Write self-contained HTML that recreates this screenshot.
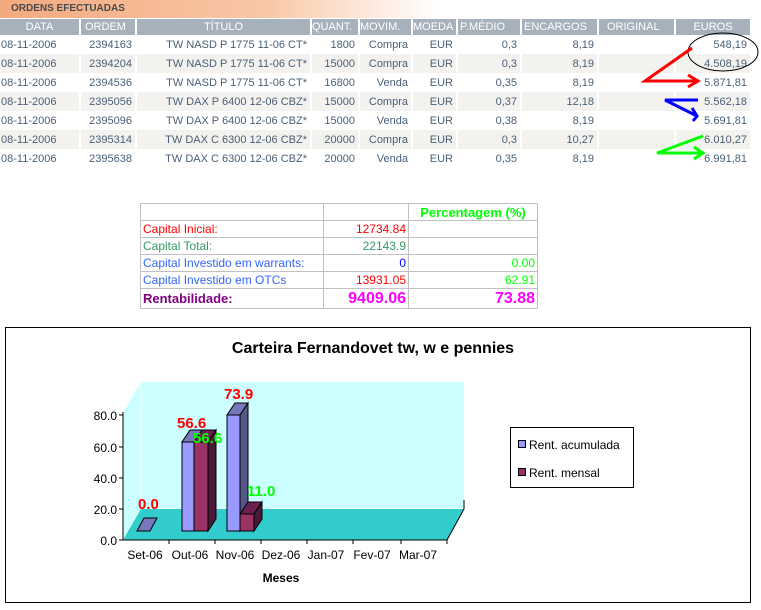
<!DOCTYPE html>
<html><head><meta charset="utf-8"><style>
body{margin:0;width:761px;height:610px;background:#fff;position:relative;overflow:hidden;font-family:"Liberation Sans",Arial,sans-serif}
.hb{position:absolute;left:0;top:0;width:440px;height:18px;background:linear-gradient(90deg,#f3a97f 0%,#f8c7a6 60%,#fff 100%)}
.hb span{position:absolute;left:11px;top:3px;font-size:10px;font-weight:bold;color:#4a4a4a}
table.o{position:absolute;left:0;top:19px;border-collapse:collapse;table-layout:fixed;width:751px;font-size:11px;color:#4a6078}
table.o th{background:#a7b1bb;color:#fff;font-weight:normal;height:16px;padding:0;border-right:2px solid #fff;font-size:11px;overflow:hidden;white-space:nowrap}
table.o td{height:19px;padding:0 3px 0 0;text-align:right;white-space:nowrap;border-right:2px solid #fff;overflow:hidden}
table.o tr.g td{background:#f3f2ef}
table.o td:first-child{text-align:left;padding-left:1px}
table.c{position:absolute;left:140px;top:203px;border-collapse:collapse;font-size:12px}
table.c td{border:1px solid #c0c0c0;padding:0 2px;height:16px;white-space:nowrap}
</style></head><body>
<div class="hb"><span>ORDENS EFECTUADAS</span></div>
<table class="o">
<colgroup><col style="width:80px"><col style="width:56px"><col style="width:175px"><col style="width:48px"><col style="width:53px"><col style="width:45px"><col style="width:64px"><col style="width:77px"><col style="width:77px"><col style="width:76px"></colgroup>
<tr><th>DATA</th><th style="text-align:left;padding-left:4px">ORDEM</th><th>TÍTULO</th><th style="text-align:left">QUANT.</th><th style="text-align:left">MOVIM.</th><th style="text-align:left">MOEDA</th><th style="text-align:left;padding-left:2px">P.MÉDIO</th><th style="text-align:left;padding-left:2px">ENCARGOS</th><th style="text-align:left;padding-left:8px">ORIGINAL</th><th>EUROS</th></tr>
<tr><td>08-11-2006</td><td>2394163</td><td>TW NASD P 1775 11-06 CT*</td><td>1800</td><td>Compra</td><td>EUR</td><td>0,3</td><td>8,19</td><td></td><td>548,19</td></tr>
<tr class="g"><td>08-11-2006</td><td>2394204</td><td>TW NASD P 1775 11-06 CT*</td><td>15000</td><td>Compra</td><td>EUR</td><td>0,3</td><td>8,19</td><td></td><td>4.508,19</td></tr>
<tr><td>08-11-2006</td><td>2394536</td><td>TW NASD P 1775 11-06 CT*</td><td>16800</td><td>Venda</td><td>EUR</td><td>0,35</td><td>8,19</td><td></td><td>5.871,81</td></tr>
<tr class="g"><td>08-11-2006</td><td>2395056</td><td>TW DAX P 6400 12-06 CBZ*</td><td>15000</td><td>Compra</td><td>EUR</td><td>0,37</td><td>12,18</td><td></td><td>5.562,18</td></tr>
<tr><td>08-11-2006</td><td>2395096</td><td>TW DAX P 6400 12-06 CBZ*</td><td>15000</td><td>Venda</td><td>EUR</td><td>0,38</td><td>8,19</td><td></td><td>5.691,81</td></tr>
<tr class="g"><td>08-11-2006</td><td>2395314</td><td>TW DAX C 6300 12-06 CBZ*</td><td>20000</td><td>Compra</td><td>EUR</td><td>0,3</td><td>10,27</td><td></td><td>6.010,27</td></tr>
<tr><td>08-11-2006</td><td>2395638</td><td>TW DAX C 6300 12-06 CBZ*</td><td>20000</td><td>Venda</td><td>EUR</td><td>0,35</td><td>8,19</td><td></td><td>6.991,81</td></tr>
</table>
<svg style="position:absolute;left:0;top:0" width="761" height="170">
<ellipse cx="723" cy="52" rx="35" ry="19" fill="none" stroke="#000" stroke-width="1"/>
<g fill="none" stroke-width="3" stroke-linejoin="miter">
<polyline points="692,48 645,81 698,81" stroke="#f00"/><polyline points="688,75 698,81 688,87" stroke="#f00"/>
<polyline points="698,100 665,100 697,116" stroke="#00f"/><polyline points="692,108 697,116 693,121" stroke="#00f"/>
<polyline points="703,136 657,153 703,153" stroke="#0f0"/><polyline points="694,147 703,153 694,159" stroke="#0f0"/>
</g></svg>
<table class="c">
<tr><td style="width:178px"></td><td style="width:80px"></td><td style="width:124px;text-align:center;color:#0f0;font-weight:bold;font-size:13px">Percentagem (%)</td></tr>
<tr><td style="color:#f00">Capital Inicial:</td><td style="text-align:right;color:#f00">12734.84</td><td></td></tr>
<tr><td style="color:#339966">Capital Total:</td><td style="text-align:right;color:#339966">22143.9</td><td></td></tr>
<tr><td style="color:#3366ff">Capital Investido em warrants:</td><td style="text-align:right;color:#00f">0</td><td style="text-align:right;color:#0f0">0.00</td></tr>
<tr><td style="color:#3366ff">Capital Investido em OTCs</td><td style="text-align:right;color:#f00">13931.05</td><td style="text-align:right;color:#0f0">62.91</td></tr>
<tr><td style="color:#800080;font-weight:bold;font-size:13px;height:19px">Rentabilidade:</td><td style="text-align:right;color:#f0f;font-weight:bold;font-size:16px">9409.06</td><td style="text-align:right;color:#f0f;font-weight:bold;font-size:16px">73.88</td></tr>
</table>
<svg style="position:absolute;left:0;top:0" width="761" height="610" font-family="Liberation Sans, Arial, sans-serif">
<rect x="5.5" y="327.5" width="745" height="275" fill="#fff" stroke="#000"/>
<text x="373" y="353" text-anchor="middle" font-size="16" font-weight="bold">Carteira Fernandovet tw, w e pennies</text>
<polygon points="141,382 464,382 464,509 141,509" fill="#ccffff"/>
<polygon points="123,412 141,382 141,509 123,540" fill="#ccffff"/>
<line x1="141" y1="382" x2="141" y2="509" stroke="#fff"/>
<line x1="141" y1="509" x2="464" y2="509" stroke="#fff"/>
<polygon points="123,540 141,509 464,509 447,540" fill="#33cccc"/>
<polyline points="447,540 464,509 464,500" fill="none" stroke="#000"/>
<line x1="123" y1="412" x2="123" y2="540" stroke="#000"/>
<line x1="123" y1="540" x2="447" y2="540" stroke="#000"/>
<g stroke="#000"><line x1="119" y1="415" x2="123" y2="415"/><line x1="119" y1="447" x2="123" y2="447"/><line x1="119" y1="478" x2="123" y2="478"/><line x1="119" y1="509" x2="123" y2="509"/><line x1="119" y1="540" x2="123" y2="540"/>
<line x1="169" y1="540" x2="169" y2="544"/><line x1="215" y1="540" x2="215" y2="544"/><line x1="261" y1="540" x2="261" y2="544"/><line x1="307" y1="540" x2="307" y2="544"/><line x1="353" y1="540" x2="353" y2="544"/><line x1="401" y1="540" x2="401" y2="544"/><line x1="447" y1="540" x2="447" y2="544"/></g>
<g font-size="12" text-anchor="end"><text x="117" y="420">80.0</text><text x="117" y="452">60.0</text><text x="117" y="483">40.0</text><text x="117" y="514">20.0</text><text x="117" y="545">0.0</text></g>
<g font-size="12" text-anchor="middle"><text x="145" y="559">Set-06</text><text x="190" y="559">Out-06</text><text x="235" y="559">Nov-06</text><text x="281" y="559">Dez-06</text><text x="326" y="559">Jan-07</text><text x="372" y="559">Fev-07</text><text x="418" y="559">Mar-07</text></g>
<text x="281" y="582" font-size="12" font-weight="bold" text-anchor="middle">Meses</text>
<g stroke="#000" stroke-width="1">
<polygon points="137,531 150,531 157,518 144,518" fill="#7777bb"/>
<polygon points="182,442 194,442 202,430 190,430" fill="#7777bb"/>
<rect x="182" y="442" width="12" height="89" fill="#9999ff"/>
<polygon points="194,442 208,442 216,430 202,430" fill="#6b2150"/>
<polygon points="208,442 216,430 216,519 208,531" fill="#4a1838"/>
<rect x="194" y="442" width="14" height="89" fill="#993366"/>
<polygon points="227,415 240,415 248,403 235,403" fill="#7777bb"/>
<polygon points="240,415 248,403 248,519 240,531" fill="#555588"/>
<rect x="227" y="415" width="13" height="116" fill="#9999ff"/>
<polygon points="240,514 254,514 262,502 248,502" fill="#6b2150"/>
<polygon points="254,514 262,502 262,519 254,531" fill="#4a1838"/>
<rect x="240" y="514" width="14" height="17" fill="#993366"/>
</g>
<g font-size="15" font-weight="bold"><text x="138" y="509" fill="#f00">0.0</text><text x="177" y="428" fill="#f00">56.6</text><text x="193" y="443" fill="#0f0">56.6</text><text x="224" y="399" fill="#f00">73.9</text><text x="247" y="496" fill="#0f0">11.0</text></g>
<rect x="510.5" y="427.5" width="123" height="60" fill="#fff" stroke="#000"/>
<rect x="518.5" y="440.5" width="7" height="7" fill="#9999ff" stroke="#000"/>
<rect x="518.5" y="468.5" width="7" height="7" fill="#993366" stroke="#000"/>
<g font-size="12"><text x="529" y="449">Rent. acumulada</text><text x="529" y="477">Rent. mensal</text></g>
</svg>
</body></html>
